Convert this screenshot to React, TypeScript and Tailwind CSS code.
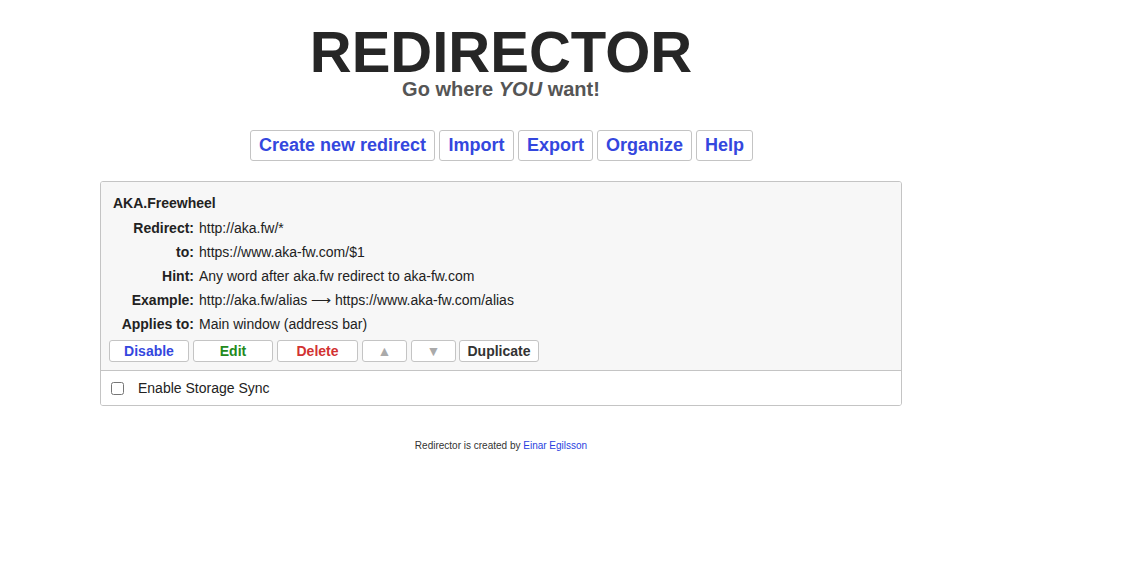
import { useState } from "react";

const rows: [string, string][] = [
  ["Redirect:", "http://aka.fw/*"],
  ["to:", "https://www.aka-fw.com/$1"],
  ["Hint:", "Any word after aka.fw redirect to aka-fw.com"],
  ["Example:", "http://aka.fw/alias \u27F6 https://www.aka-fw.com/alias"],
  ["Applies to:", "Main window (address bar)"],
];

const topButtons = [
  { label: "Create new redirect", w: "w-[185px]" },
  { label: "Import", w: "w-[75px]" },
  { label: "Export", w: "w-[75px]" },
  { label: "Organize", w: "w-[95px]" },
  { label: "Help", w: "w-[57px]" },
];

const SmallButton = ({ children, className }: { children: React.ReactNode; className: string }) => (
  <button
    className={
      "flex h-[22px] items-center justify-center rounded-[3px] border border-[#c4c4c4] bg-white font-bold " +
      className
    }
  >
    {children}
  </button>
);

export default function App() {
  const [sync, setSync] = useState(false);

  return (
    <div className="min-h-[588px] bg-white font-['Liberation_Sans',Arial,sans-serif] text-[#222]">
      <div className="ml-[100px] flex w-[802px] flex-col items-center pt-[26px]">
        <h1 className="text-[58px] leading-[52px] font-bold text-[#262626]">REDIRECTOR</h1>
        <p className="mt-[1px] text-[20px] leading-[21px] font-bold text-[#555]">
          Go where <i>YOU</i> want!
        </p>

        <div className="mt-[30px] flex gap-[4px] pl-[1px]">
          {topButtons.map((b) => (
            <button
              key={b.label}
              className={
                "flex h-[31px] items-center justify-center rounded-[3px] border border-[#c4c4c4] bg-white text-[18px] font-bold text-[#3447de] " +
                b.w
              }
            >
              {b.label}
            </button>
          ))}
        </div>

        <div className="mt-[20px] w-full overflow-hidden rounded-[3px] border border-[#c4c4c4]">
          <div className="border-b border-[#c4c4c4] bg-[#f7f7f7] px-[8px] pt-[12px] pb-[8px]">
            <div className="pl-[4px] text-[14px] leading-[18px] font-bold">AKA.Freewheel</div>
            <div className="mt-[4px] mb-[1px] flex flex-col">
              {rows.map(([k, v]) => (
                <div key={k} className="flex h-[24px] items-center gap-[5px] text-[14px]">
                  <span className="w-[85px] text-right font-bold">{k}</span>
                  <span>{v}</span>
                </div>
              ))}
            </div>
            <div className="mt-[4px] flex gap-[4px]">
              <SmallButton className="w-[80px] text-[14px] text-[#3447de]">Disable</SmallButton>
              <SmallButton className="w-[80px] text-[14px] text-[#238a1c]">Edit</SmallButton>
              <SmallButton className="w-[81px] text-[14px] text-[#d23232]">Delete</SmallButton>
              <SmallButton className="w-[45px] text-[14px] text-[#aaa]">▲</SmallButton>
              <SmallButton className="w-[45px] text-[14px] text-[#aaa]">▼</SmallButton>
              <SmallButton className="-ml-[1px] w-[80px] text-[14px] text-[#333]">Duplicate</SmallButton>
            </div>
          </div>
          <label className="flex h-[34px] items-center bg-white pl-[10px] text-[14px] text-[#222]">
            <input
              type="checkbox"
              checked={sync}
              onChange={(e) => setSync(e.target.checked)}
              className="m-0 h-[13px] w-[13px]"
            />
            <span className="ml-[14px]">Enable Storage Sync</span>
          </label>
        </div>

        <p className="mt-[32px] text-[10px] text-[#333]">
          Redirector is created by <a className="text-[#2a3fe0]">Einar Egilsson</a>
        </p>
      </div>
    </div>
  );
}
